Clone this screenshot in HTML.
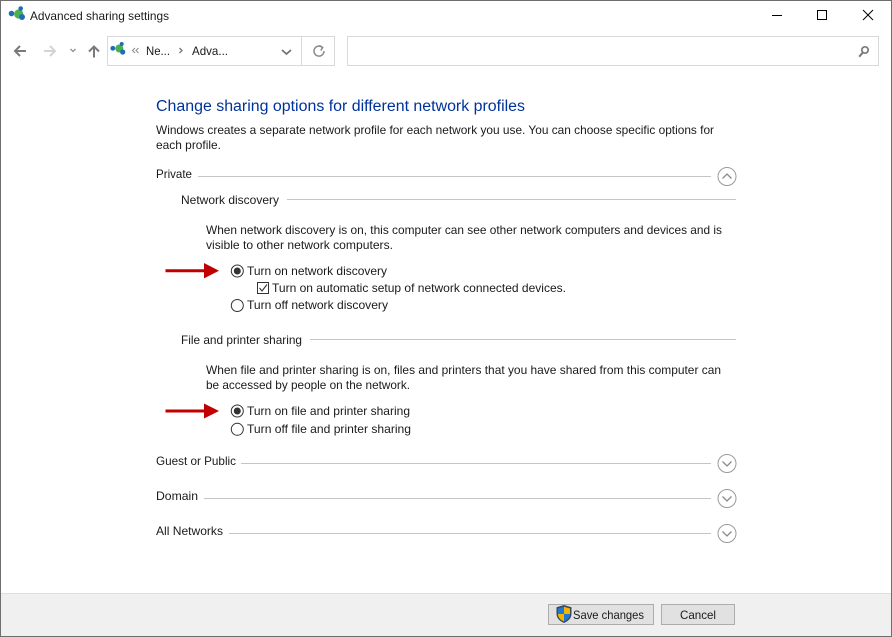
<!DOCTYPE html>
<html><head><meta charset="utf-8"><style>
html,body{margin:0;padding:0;background:#fff;width:892px;height:637px;overflow:hidden}
svg{display:block}
text{font-family:"Liberation Sans",sans-serif;font-size:12px;fill:#1a1a1a;white-space:pre}
</style></head><body>
<svg width="892" height="637" viewBox="0 0 892 637" xmlns="http://www.w3.org/2000/svg">
<rect width="892" height="637" fill="#fff"/>
<rect x="1" y="593" width="890" height="43" fill="#f0f0f0"/>
<rect x="1" y="593" width="890" height="1" fill="#dfdfdf"/>
<rect x="0.500" y="0.500" width="891" height="636" fill="none" stroke="#6e6e6e"/>
<circle cx="18.700" cy="14" r="4.600" fill="#4caf50"/><circle cx="11.500" cy="13.500" r="2.800" fill="#1f6cb8"/><circle cx="20.700" cy="8.500" r="2.300" fill="#1f6cb8"/><circle cx="22" cy="17" r="3" fill="#1f6cb8"/>
<text x="30" y="20" textLength="139" lengthAdjust="spacingAndGlyphs">Advanced sharing settings</text>
<path d="M772 15.500h10" stroke="#000"/>
<rect x="817.500" y="10.500" width="9" height="9" fill="none" stroke="#000"/>
<path d="M863 10l10 10M873 10l-10 10" stroke="#000" fill="none"/>
<path d="M26 51H15M20 46L15 51l5 5" fill="none" stroke="#7a7a7a" stroke-width="2"/>
<path d="M44 51h11M50 46l5 5-5 5" fill="none" stroke="#d4d4d4" stroke-width="2"/>
<path d="M70.500 49l2.500 2.500 2.500-2.500" fill="none" stroke="#909090" stroke-width="1.300"/>
<path d="M94 57.500V47M89 51.500L94 46.500l5 5" fill="none" stroke="#7a7a7a" stroke-width="2"/>
<rect x="107.500" y="36.500" width="227" height="29" fill="#fff" stroke="#d9d9d9"/>
<path d="M301.500 37v28" stroke="#d9d9d9"/>
<circle cx="119.300" cy="48.500" r="4" fill="#4caf50"/><circle cx="112.800" cy="48.300" r="2.400" fill="#1f6cb8"/><circle cx="121.700" cy="44" r="2" fill="#1f6cb8"/><circle cx="122.700" cy="52" r="2.600" fill="#1f6cb8"/>
<path d="M135 48l-2.500 2.500 2.500 2.500M138.500 48l-2.500 2.500 2.500 2.500" fill="none" stroke="#8a8a8a"/>
<text x="146" y="55" textLength="24" lengthAdjust="spacingAndGlyphs">Ne...</text>
<path d="M179.500 48l2.500 2.500-2.500 2.500" fill="none" stroke="#777" stroke-width="1.300"/>
<text x="192" y="55" textLength="36" lengthAdjust="spacingAndGlyphs">Adva...</text>
<path d="M282 50l4.500 4 4.500-4" fill="none" stroke="#707070" stroke-width="1.700"/>
<path d="M322.500 47.500a5 5 0 1 0 1.500 3.500M319.500 45.500l3.200 2.200-2 2.800" fill="none" stroke="#8a8a8a" stroke-width="1.500"/>
<rect x="347.500" y="36.500" width="531" height="29" fill="#fff" stroke="#d9d9d9"/>
<circle cx="865" cy="50" r="3.200" fill="none" stroke="#7a7a7a" stroke-width="1.700"/>
<path d="M862.700 52.700l-3.500 4" stroke="#7a7a7a" stroke-width="2"/>

<text x="156" y="111" textLength="369" lengthAdjust="spacingAndGlyphs" style="font-size:15.500px;fill:#003399">Change sharing options for different network profiles</text>
<text x="156" y="134" textLength="558" lengthAdjust="spacingAndGlyphs">Windows creates a separate network profile for each network you use. You can choose specific options for</text>
<text x="156" y="149" textLength="65" lengthAdjust="spacingAndGlyphs">each profile.</text>

<text x="156" y="178" textLength="36" lengthAdjust="spacingAndGlyphs">Private</text>
<rect x="198" y="176" width="513" height="1" fill="#c4c4c4"/>
<circle cx="727" cy="176.500" r="9" fill="#fff" stroke="#9a9a9a"/>
<path d="M722.500 178.500l4.500-4.500 4.500 4.500" fill="none" stroke="#8a8a8a" stroke-width="1.300"/>

<text x="181" y="204" textLength="98" lengthAdjust="spacingAndGlyphs">Network discovery</text>
<rect x="287" y="199" width="449" height="1" fill="#c4c4c4"/>
<text x="206" y="234" textLength="516" lengthAdjust="spacingAndGlyphs">When network discovery is on, this computer can see other network computers and devices and is</text>
<text x="206" y="249" textLength="187" lengthAdjust="spacingAndGlyphs">visible to other network computers.</text>

<path d="M165.500 270.700H205" stroke="#c00000" stroke-width="3"/>
<path d="M204 263l15 7.700-15 7.700z" fill="#c00000"/>
<circle cx="237.300" cy="271" r="6" fill="#fff" stroke="#333"/>
<circle cx="237.300" cy="271" r="3.500" fill="#333"/>
<text x="247" y="275" textLength="140" lengthAdjust="spacingAndGlyphs">Turn on network discovery</text>
<rect x="257.500" y="282.500" width="11" height="11" fill="#fff" stroke="#333"/>
<path d="M259.500 288l2.500 3 5-6.500" fill="none" stroke="#333" stroke-width="1.100"/>
<text x="272" y="292" textLength="294" lengthAdjust="spacingAndGlyphs">Turn on automatic setup of network connected devices.</text>
<circle cx="237.300" cy="305.500" r="6" fill="#fff" stroke="#333"/>
<text x="247" y="309" textLength="141" lengthAdjust="spacingAndGlyphs">Turn off network discovery</text>

<text x="181" y="344" textLength="121" lengthAdjust="spacingAndGlyphs">File and printer sharing</text>
<rect x="310" y="339" width="426" height="1" fill="#c4c4c4"/>
<text x="206" y="374" textLength="515" lengthAdjust="spacingAndGlyphs">When file and printer sharing is on, files and printers that you have shared from this computer can</text>
<text x="206" y="389" textLength="204" lengthAdjust="spacingAndGlyphs">be accessed by people on the network.</text>

<path d="M165.500 411H205" stroke="#c00000" stroke-width="3"/>
<path d="M204 403.500l15 7.500-15 7.500z" fill="#c00000"/>
<circle cx="237.300" cy="411" r="6" fill="#fff" stroke="#333"/>
<circle cx="237.300" cy="411" r="3.500" fill="#333"/>
<text x="247" y="415" textLength="163" lengthAdjust="spacingAndGlyphs">Turn on file and printer sharing</text>
<circle cx="237.300" cy="429.300" r="6" fill="#fff" stroke="#333"/>
<text x="247" y="433" textLength="164" lengthAdjust="spacingAndGlyphs">Turn off file and printer sharing</text>

<text x="156" y="465" textLength="80" lengthAdjust="spacingAndGlyphs">Guest or Public</text>
<rect x="241" y="463" width="470" height="1" fill="#c4c4c4"/>
<circle cx="727" cy="463.500" r="9" fill="#fff" stroke="#9a9a9a"/>
<path d="M722.500 461.500l4.500 4.500 4.500-4.500" fill="none" stroke="#8a8a8a" stroke-width="1.300"/>

<text x="156" y="500" textLength="42" lengthAdjust="spacingAndGlyphs">Domain</text>
<rect x="204" y="498" width="507" height="1" fill="#c4c4c4"/>
<circle cx="727" cy="498.500" r="9" fill="#fff" stroke="#9a9a9a"/>
<path d="M722.500 496.500l4.500 4.500 4.500-4.500" fill="none" stroke="#8a8a8a" stroke-width="1.300"/>

<text x="156" y="535" textLength="67" lengthAdjust="spacingAndGlyphs">All Networks</text>
<rect x="229" y="533" width="482" height="1" fill="#c4c4c4"/>
<circle cx="727" cy="533.500" r="9" fill="#fff" stroke="#9a9a9a"/>
<path d="M722.500 531.500l4.500 4.500 4.500-4.500" fill="none" stroke="#8a8a8a" stroke-width="1.300"/>

<rect x="548.500" y="604.500" width="105" height="20" fill="#e1e1e1" stroke="#adadad"/>
<path d="M564 605l7.500 2.300v6.700c0 4.300-3.500 7.300-7.500 9-4-1.700-7.500-4.700-7.500-9v-6.700z" fill="#3a4a60"/>
<path d="M564 606.800V614h-6v-5.500z" fill="#1f78d1"/><path d="M564 606.800l6 1.700v5.500h-6z" fill="#f5b400"/>
<path d="M558 614h6v7.500c-3.200-1.400-6-3.700-6-7.500z" fill="#f5b400"/><path d="M564 614h6c0 3.800-2.800 6.100-6 7.500z" fill="#1f78d1"/>
<text x="573" y="619" textLength="71" lengthAdjust="spacingAndGlyphs">Save changes</text>
<rect x="661.500" y="604.500" width="73" height="20" fill="#e1e1e1" stroke="#adadad"/>
<text x="680" y="619" textLength="36" lengthAdjust="spacingAndGlyphs">Cancel</text>
</svg>
</body></html>
